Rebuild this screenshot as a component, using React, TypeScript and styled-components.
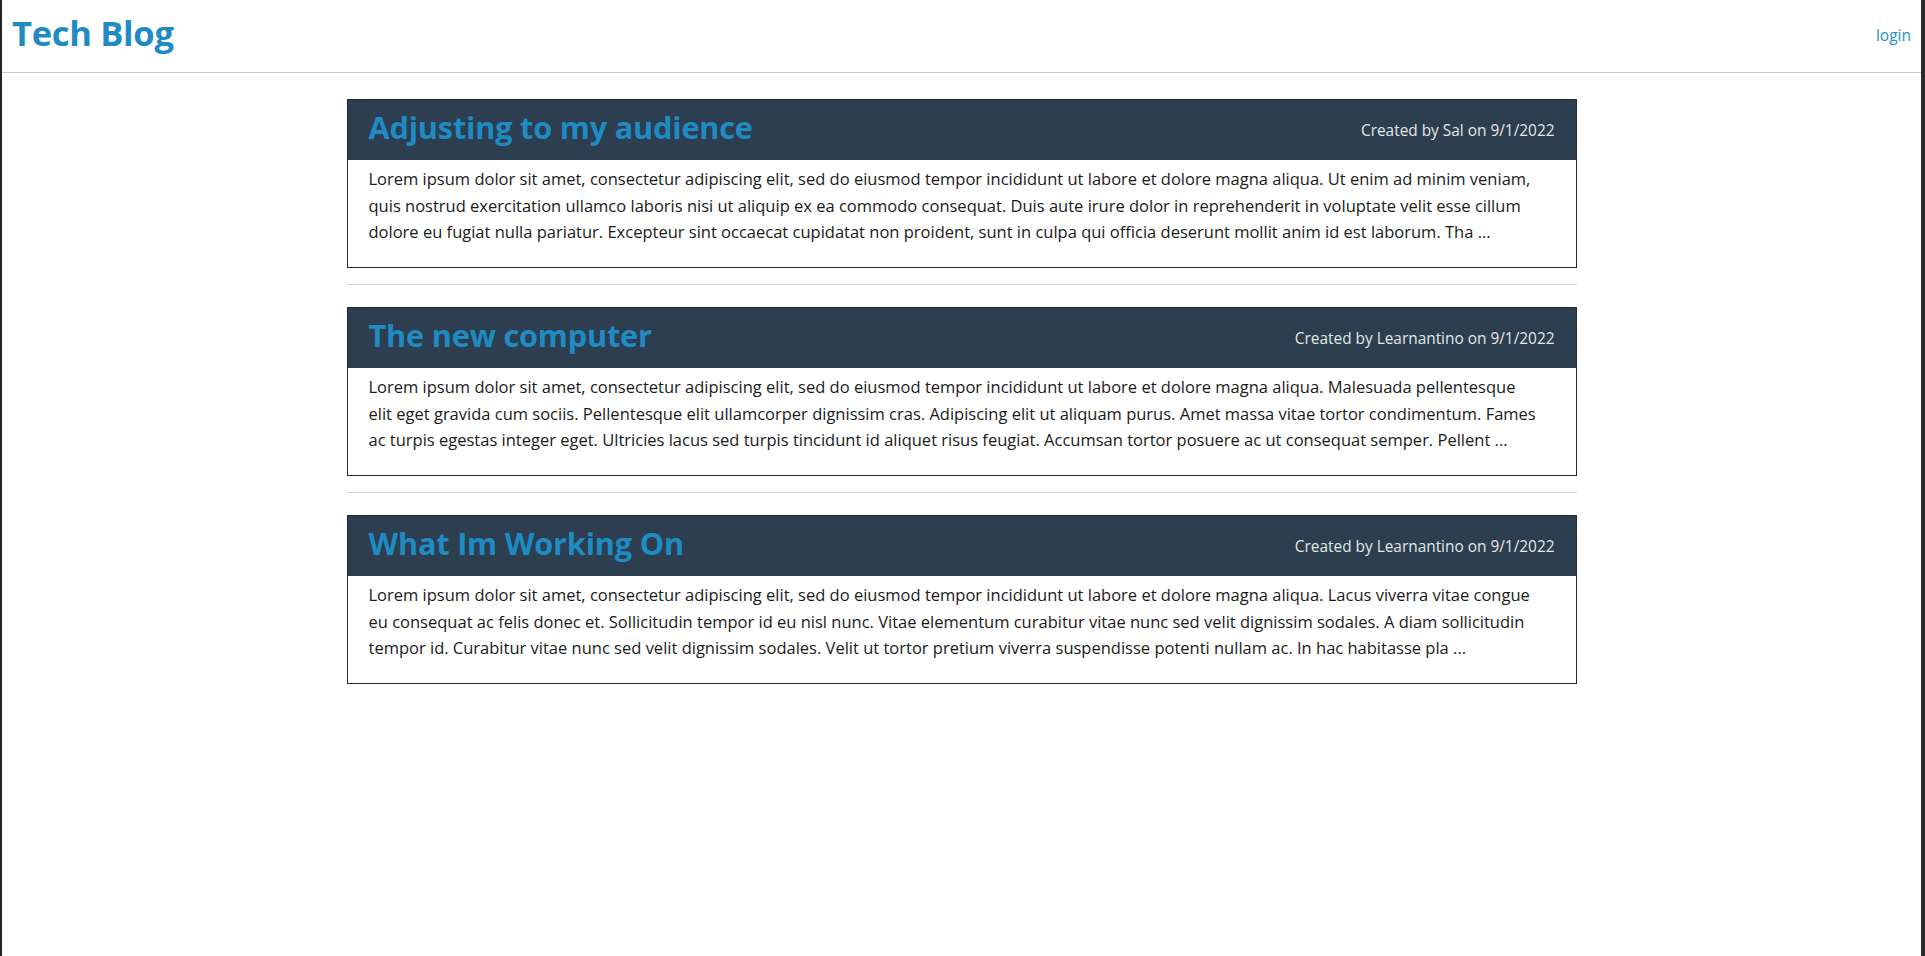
import React from "react";
import styled, { createGlobalStyle } from "styled-components";

const Global = createGlobalStyle`
  html, body { margin: 0; padding: 0; background: #ffffff; }
  body { font-family: "Open Sans", "Noto Sans", sans-serif; color: #1a1a1a; }
`;

const Frame = styled.div`
  min-height: 956px;
  box-sizing: border-box;
  border-left: 2px solid #232323;
  border-right: 4px solid #2b2b2b;
  background: #fff;
`;

const TopBar = styled.header`
  height: 72px;
  border-bottom: 1px solid #cccccc;
  display: flex;
  align-items: center;
  justify-content: space-between;
  padding: 0 10px 0 10px;
`;

const Brand = styled.h1`
  margin: 0;
  font-size: 34.5px;
  font-weight: 700;
  color: #1e8bc3;
  letter-spacing: -0.3px;
  padding-bottom: 7px;
`;

const LoginLink = styled.a`
  font-size: 15.5px;
  color: #2a8fcc;
  text-decoration: none;
  padding-bottom: 3px;
`;

const Feed = styled.main`
  width: 1230px;
  margin: 26px auto 0;
  display: flex;
  flex-direction: column;
`;

const Post = styled.article`
  border: 1px solid #222831;
  background: #fff;
`;

const PostHead = styled.div`
  height: 60px;
  background: #2d3e50;
  display: flex;
  align-items: center;
  justify-content: space-between;
  padding: 0 21px 0 21px;
`;

const PostTitle = styled.h2`
  margin: 0;
  font-size: 30.7px;
  font-weight: 700;
  color: #1e8bc3;
  letter-spacing: -0.2px;
  padding-bottom: 7px;
`;

const PostMeta = styled.span`
  font-size: 15.4px;
  color: #e6e6e6;
`;

const PostBody = styled.p`
  margin: 0;
  padding: 6px 21px 21px 21px;
  font-size: 16.5px;
  line-height: 26.67px;
  color: #1a1a1a;
`;

const BodyLine = styled.span`
  display: block;
  white-space: nowrap;
`;

const Divider = styled.hr`
  border: 0;
  border-top: 1px solid #d0d0d0;
  margin: 16px 0 22px;
`;

const posts = [
  {
    title: "Adjusting to my audience",
    meta: "Created by Sal on 9/1/2022",
    lines: [
      "Lorem ipsum dolor sit amet, consectetur adipiscing elit, sed do eiusmod tempor incididunt ut labore et dolore magna aliqua. Ut enim ad minim veniam,",
      "quis nostrud exercitation ullamco laboris nisi ut aliquip ex ea commodo consequat. Duis aute irure dolor in reprehenderit in voluptate velit esse cillum",
      "dolore eu fugiat nulla pariatur. Excepteur sint occaecat cupidatat non proident, sunt in culpa qui officia deserunt mollit anim id est laborum. Tha ...",
    ],
  },
  {
    title: "The new computer",
    meta: "Created by Learnantino on 9/1/2022",
    lines: [
      "Lorem ipsum dolor sit amet, consectetur adipiscing elit, sed do eiusmod tempor incididunt ut labore et dolore magna aliqua. Malesuada pellentesque",
      "elit eget gravida cum sociis. Pellentesque elit ullamcorper dignissim cras. Adipiscing elit ut aliquam purus. Amet massa vitae tortor condimentum. Fames",
      "ac turpis egestas integer eget. Ultricies lacus sed turpis tincidunt id aliquet risus feugiat. Accumsan tortor posuere ac ut consequat semper. Pellent ...",
    ],
  },
  {
    title: "What Im Working On",
    meta: "Created by Learnantino on 9/1/2022",
    lines: [
      "Lorem ipsum dolor sit amet, consectetur adipiscing elit, sed do eiusmod tempor incididunt ut labore et dolore magna aliqua. Lacus viverra vitae congue",
      "eu consequat ac felis donec et. Sollicitudin tempor id eu nisl nunc. Vitae elementum curabitur vitae nunc sed velit dignissim sodales. A diam sollicitudin",
      "tempor id. Curabitur vitae nunc sed velit dignissim sodales. Velit ut tortor pretium viverra suspendisse potenti nullam ac. In hac habitasse pla ...",
    ],
  },
];

export default function App() {
  return (
    <Frame>
      <Global />
      <TopBar>
        <Brand>Tech Blog</Brand>
        <LoginLink href="#">login</LoginLink>
      </TopBar>
      <Feed>
        {posts.map((p, i) => (
          <React.Fragment key={p.title}>
            {i > 0 && <Divider />}
            <Post>
              <PostHead>
                <PostTitle>{p.title}</PostTitle>
                <PostMeta>{p.meta}</PostMeta>
              </PostHead>
              <PostBody>
                {p.lines.map((l) => (
                  <BodyLine key={l}>{l}</BodyLine>
                ))}
              </PostBody>
            </Post>
          </React.Fragment>
        ))}
      </Feed>
    </Frame>
  );
}
